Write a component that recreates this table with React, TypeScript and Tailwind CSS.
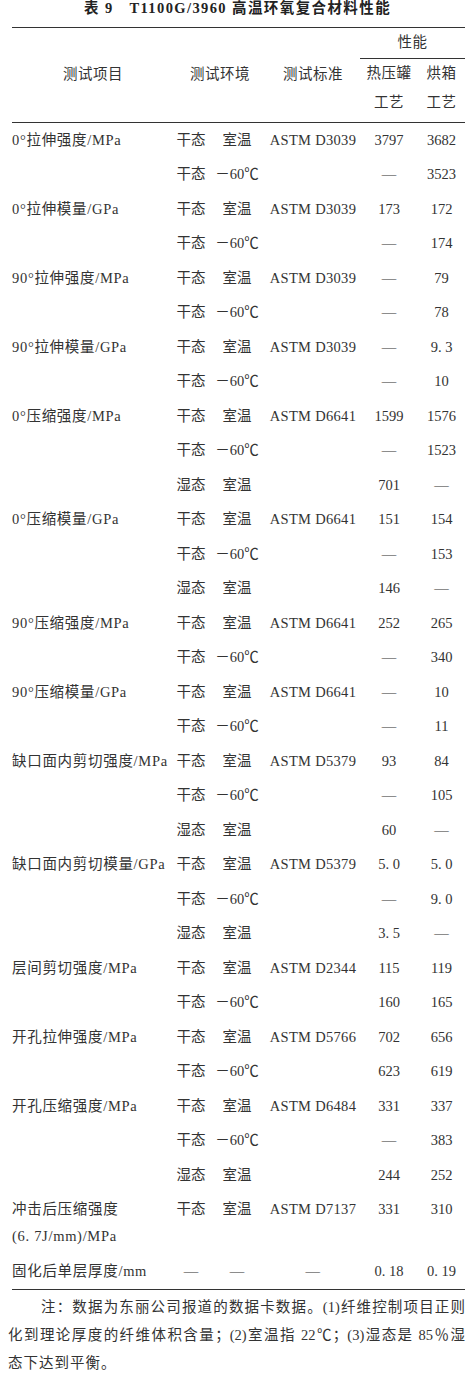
type Row = {
  name?: string;
  name2?: string;
  s: string;
  t: string;
  std?: string;
  a: string;
  b: string;
};

const DRY = "干态";
const WET = "湿态";
const RT = "室温";
const COLD = "－60℃";

const rows: Row[] = [
  { name: "0°拉伸强度/MPa", s: DRY, t: RT, std: "ASTM D3039", a: "3797", b: "3682" },
  { s: DRY, t: COLD, a: "—", b: "3523" },
  { name: "0°拉伸模量/GPa", s: DRY, t: RT, std: "ASTM D3039", a: "173", b: "172" },
  { s: DRY, t: COLD, a: "—", b: "174" },
  { name: "90°拉伸强度/MPa", s: DRY, t: RT, std: "ASTM D3039", a: "—", b: "79" },
  { s: DRY, t: COLD, a: "—", b: "78" },
  { name: "90°拉伸模量/GPa", s: DRY, t: RT, std: "ASTM D3039", a: "—", b: "9. 3" },
  { s: DRY, t: COLD, a: "—", b: "10" },
  { name: "0°压缩强度/MPa", s: DRY, t: RT, std: "ASTM D6641", a: "1599", b: "1576" },
  { s: DRY, t: COLD, a: "—", b: "1523" },
  { s: WET, t: RT, a: "701", b: "—" },
  { name: "0°压缩模量/GPa", s: DRY, t: RT, std: "ASTM D6641", a: "151", b: "154" },
  { s: DRY, t: COLD, a: "—", b: "153" },
  { s: WET, t: RT, a: "146", b: "—" },
  { name: "90°压缩强度/MPa", s: DRY, t: RT, std: "ASTM D6641", a: "252", b: "265" },
  { s: DRY, t: COLD, a: "—", b: "340" },
  { name: "90°压缩模量/GPa", s: DRY, t: RT, std: "ASTM D6641", a: "—", b: "10" },
  { s: DRY, t: COLD, a: "—", b: "11" },
  { name: "缺口面内剪切强度/MPa", s: DRY, t: RT, std: "ASTM D5379", a: "93", b: "84" },
  { s: DRY, t: COLD, a: "—", b: "105" },
  { s: WET, t: RT, a: "60", b: "—" },
  { name: "缺口面内剪切模量/GPa", s: DRY, t: RT, std: "ASTM D5379", a: "5. 0", b: "5. 0" },
  { s: DRY, t: COLD, a: "—", b: "9. 0" },
  { s: WET, t: RT, a: "3. 5", b: "—" },
  { name: "层间剪切强度/MPa", s: DRY, t: RT, std: "ASTM D2344", a: "115", b: "119" },
  { s: DRY, t: COLD, a: "160", b: "165" },
  { name: "开孔拉伸强度/MPa", s: DRY, t: RT, std: "ASTM D5766", a: "702", b: "656" },
  { s: DRY, t: COLD, a: "623", b: "619" },
  { name: "开孔压缩强度/MPa", s: DRY, t: RT, std: "ASTM D6484", a: "331", b: "337" },
  { s: DRY, t: COLD, a: "—", b: "383" },
  { s: WET, t: RT, a: "244", b: "252" },
  {
    name: "冲击后压缩强度",
    name2: "(6. 7J/mm)/MPa",
    s: DRY,
    t: RT,
    std: "ASTM D7137",
    a: "331",
    b: "310",
  },
  { name: "固化后单层厚度/mm", s: "—", t: "—", std: "—", a: "0. 18", b: "0. 19" },
];

function DataRow({ row }: { row: Row }) {
  return (
    <div className="grid grid-cols-[162px_34px_58px_94px_58px_47px] items-start py-[3.75px] leading-[27px]">
      <div className="tracking-[0.7px] whitespace-nowrap">
        {row.name && <div>{row.name}</div>}
        {row.name2 && <div>{row.name2}</div>}
      </div>
      <div className="text-center whitespace-nowrap">{row.s}</div>
      <div className="text-center whitespace-nowrap">{row.t}</div>
      <div className="text-center whitespace-nowrap tracking-[0.3px]">{row.std ?? ""}</div>
      <div className="text-center whitespace-nowrap">{row.a}</div>
      <div className="text-center whitespace-nowrap">{row.b}</div>
    </div>
  );
}

export default function App() {
  return (
    <div className="w-[475px] bg-white text-[14.5px] text-[#333] font-['Liberation_Serif','Noto_Sans_CJK_SC',serif]">
      <div className="h-[16px] text-center text-[14.5px] leading-[16px] font-bold tracking-[1.4px] text-[#222]">
        表 9　T1100G/3960 高温环氧复合材料性能
      </div>

      <div className="mt-[11px] ml-[12px] w-[453px]">
        <div className="flex border-y-[1.5px] border-[#333]">
          <div className="grid h-[94px] w-[348px] grid-cols-[162px_92px_94px] items-center">
            <div className="text-center tracking-[0.5px]">测试项目</div>
            <div className="text-center tracking-[0.5px]">测试环境</div>
            <div className="text-center tracking-[0.5px]">测试标准</div>
          </div>
          <div className="flex w-[105px] flex-col">
            <div className="flex h-[31px] items-center justify-center border-b border-[#333] tracking-[0.5px]">
              性能
            </div>
            <div className="grid grid-cols-[58px_47px] leading-[29px]">
              <div className="text-center tracking-[0.5px]">
                <div>热压罐</div>
                <div>工艺</div>
              </div>
              <div className="text-center tracking-[0.5px]">
                <div>烘箱</div>
                <div>工艺</div>
              </div>
            </div>
          </div>
        </div>

        <div className="flex flex-col border-b-[1.5px] border-[#333]">
          {rows.map((r, i) => (
            <DataRow key={i} row={r} />
          ))}
        </div>
      </div>

      <div className="mt-[3.5px] ml-[8px] w-[457px] leading-[28px]">
        <div className="pl-[33px] text-justify [text-align-last:justify] whitespace-nowrap">
          注：数据为东丽公司报道的数据卡数据。(1)纤维控制项目正则
        </div>
        <div className="text-justify [text-align-last:justify] whitespace-nowrap">
          化到理论厚度的纤维体积含量；(2)室温指 22℃；(3)湿态是 85％湿
        </div>
        <div className="tracking-[1px]">态下达到平衡。</div>
      </div>
    </div>
  );
}
